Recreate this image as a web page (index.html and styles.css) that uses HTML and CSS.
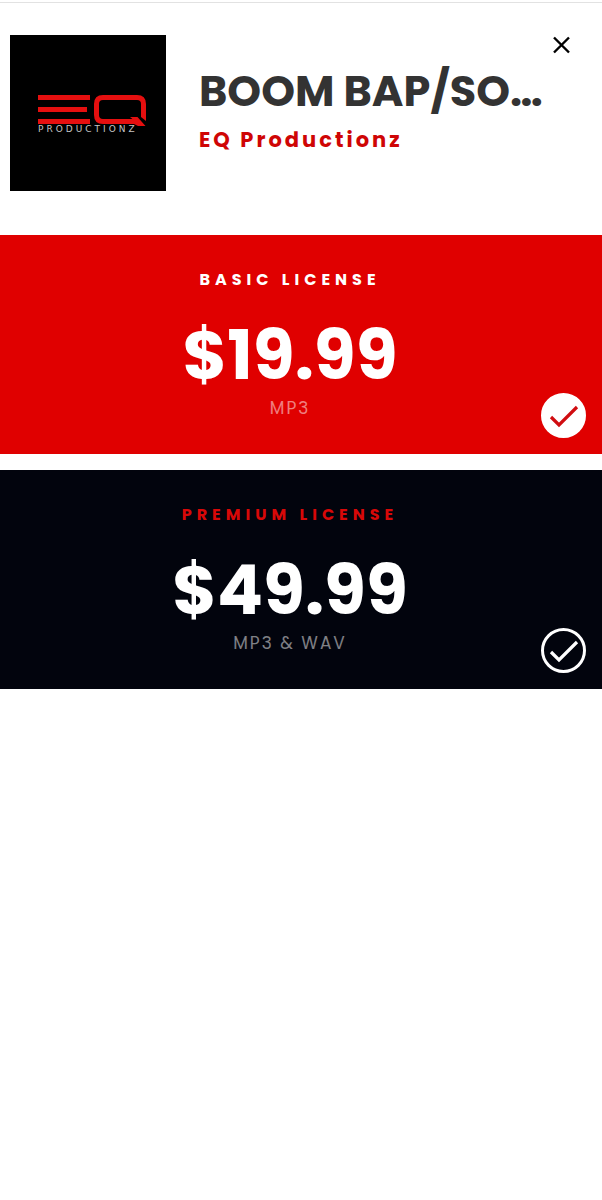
FILE: index.html
```html
<!DOCTYPE html>
<html lang="en">
<head>
<meta charset="utf-8">
<meta name="viewport" content="width=device-width, initial-scale=1">
<title>Choose a license</title>
<link rel="stylesheet" href="styles.css">
</head>
<body>
<main class="dialog">
  <header class="track">
    <svg class="cover" viewBox="0 0 156 156" role="img" aria-label="EQ Productionz">
      <rect width="156" height="156" fill="#000"/>
      <g fill="none" stroke="#e50f0f" stroke-width="5">
        <path d="M28 62.500H80M28 74.500H77M28 86.500H80"/>
        <path d="M133.500 80V69Q133.500 62.500 127 62.500H93Q86.500 62.500 86.500 69V80Q86.500 86.500 93 86.500H124"/>
      </g>
      <path d="M131 79.500H136V86L131 82Z" fill="#e50f0f"/>
      <path d="M120 82H127.500L135.500 91H128L123 88.500V84.500Z" fill="#e50f0f"/>
      <text class="cover-name" x="28" y="97">PRODUCTIONZ</text>
    </svg>
    <div class="track-info">
      <h1 class="track-title">BOOM BAP/SO…</h1>
      <a class="track-artist" href="#artist">EQ Productionz</a>
    </div>
    <button class="close" type="button" aria-label="Close">
      <svg class="close-icon" viewBox="0 0 20 20" aria-hidden="true"><path d="M2 2.500l15 15M17 2.500l-15 15" fill="none" stroke="currentColor" stroke-width="2.400"/></svg>
    </button>
  </header>
  <form class="licenses">
    <label class="license license-basic">
      <span class="license-name">BASIC LICENSE</span>
      <span class="license-price">$19.99</span>
      <span class="license-files">MP3</span>
      <span class="mark">
        <input class="mark-input" type="radio" name="license" checked>
        <svg class="mark-icon" viewBox="0 0 45 45" aria-hidden="true"><path d="M10 24L18 32L36 14" fill="none" stroke="currentColor" stroke-width="3.200"/></svg>
      </span>
    </label>
    <label class="license license-premium">
      <span class="license-name">PREMIUM LICENSE</span>
      <span class="license-price">$49.99</span>
      <span class="license-files">MP3 &amp; WAV</span>
      <span class="mark">
        <input class="mark-input" type="radio" name="license">
        <svg class="mark-icon" viewBox="0 0 45 45" aria-hidden="true"><path d="M10 24L18 32L36 14" fill="none" stroke="currentColor" stroke-width="3.200"/></svg>
      </span>
    </label>
  </form>
</main>
</body>
</html>
```
FILE: styles.css
```css
* {
  box-sizing: border-box;
}

body {
  margin: 0;
  background: #fff;
  font-family: Poppins, Inter, "Liberation Sans", sans-serif;
}

.dialog {
  margin-top: 2px;
  border-top: 1px solid #e2e2e2;
}

.track {
  display: flex;
  align-items: flex-start;
  padding: 32px 30px 44px 10px;
}

.cover {
  flex: none;
  width: 156px;
  height: 156px;
}

.cover-name {
  fill: #c4c4c4;
  font-family: "DejaVu Sans", sans-serif;
  font-size: 9px;
  letter-spacing: 3px;
}

.track-info {
  flex: 1;
  min-width: 0;
  padding: 23px 0 0 33px;
}

.track-title {
  margin: 0;
  overflow: hidden;
  color: #333;
  font-size: 43px;
  font-weight: 700;
  line-height: 66px;
  text-overflow: ellipsis;
  white-space: nowrap;
}

.track-artist {
  display: block;
  color: #cf0505;
  font-size: 21px;
  font-weight: 700;
  letter-spacing: 3px;
  line-height: 32px;
  text-decoration: none;
}

.close {
  display: grid;
  padding: 0;
  border: 0;
  background: none;
  color: #000;
  cursor: pointer;
}

.close-icon {
  width: 20px;
  height: 20px;
}

.licenses {
  display: grid;
  gap: 16px;
}

.license {
  position: relative;
  display: grid;
  justify-items: center;
  padding: 32px 38px 34px 16px;
  color: #fff;
  text-align: center;
  cursor: pointer;
}

.license-basic {
  background: #e00000;
}

.license-premium {
  background: #02040d;
}

.license-name {
  font-size: 16px;
  font-weight: 700;
  letter-spacing: 5px;
  line-height: 26px;
}

.license-premium .license-name {
  color: #d80808;
}

.license-price {
  margin-top: 23px;
  font-size: 68px;
  font-weight: 700;
  line-height: 80px;
}

.license-files {
  color: rgba(255, 255, 255, 0.5);
  font-size: 17px;
  letter-spacing: 2px;
  line-height: 24px;
}

.mark {
  position: absolute;
  right: 16px;
  bottom: 16px;
  display: grid;
}

.mark-input,
.mark-icon {
  grid-area: 1 / 1;
  width: 45px;
  height: 45px;
  margin: 0;
}

.mark-input {
  appearance: none;
  border: 3px solid #fff;
  border-radius: 50%;
}

.mark-input:checked {
  background: #fff;
}

.mark-input:checked + .mark-icon {
  color: #d00c10;
}

.mark-icon {
  pointer-events: none;
}
```
